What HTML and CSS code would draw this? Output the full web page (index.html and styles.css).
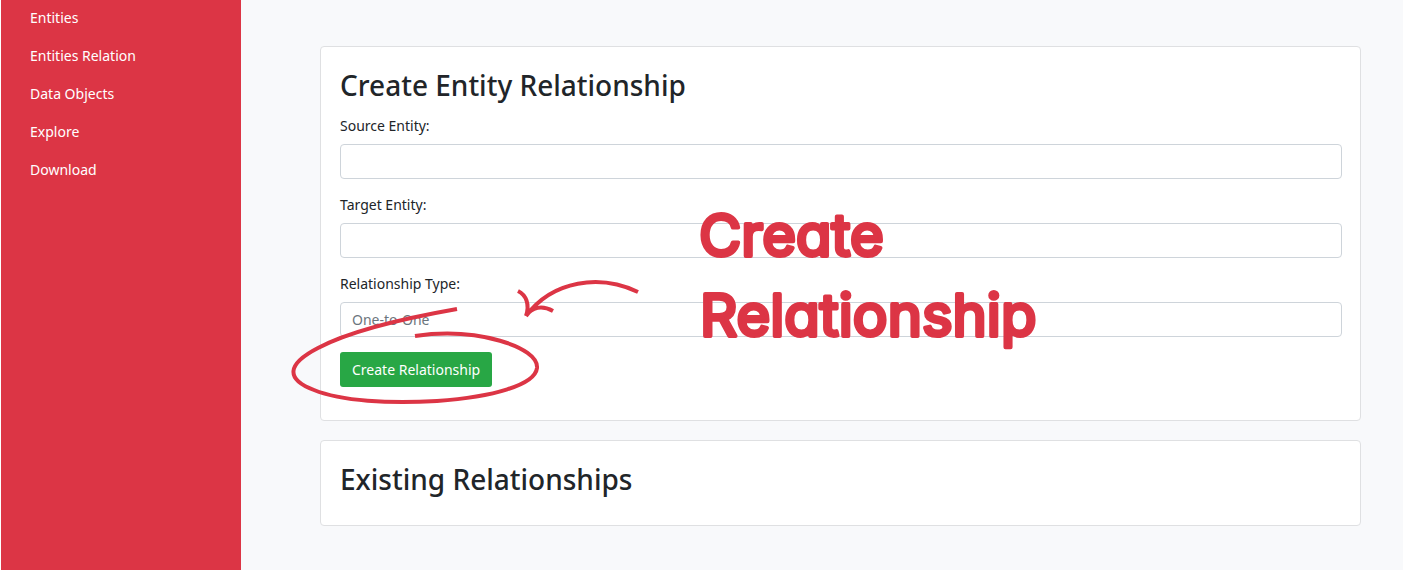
FILE: index.html
```
<!DOCTYPE html>
<html lang="en">
<head>
<meta charset="utf-8">
<title>Create Entity Relationship</title>
<link rel="stylesheet" href="styles.css">
</head>
<body>
<div class="layout">
  <nav class="sidebar">
    <a class="nav-link" href="#">Entities</a>
    <a class="nav-link" href="#">Entities Relation</a>
    <a class="nav-link" href="#">Data Objects</a>
    <a class="nav-link" href="#">Explore</a>
    <a class="nav-link" href="#">Download</a>
  </nav>
  <main class="content">
    <section class="card card-form">
      <h2 class="title">Create Entity Relationship</h2>
      <form>
        <div class="field">
          <label class="label" for="source">Source Entity:</label>
          <input class="control" id="source" type="text">
        </div>
        <div class="field">
          <label class="label" for="target">Target Entity:</label>
          <input class="control" id="target" type="text">
        </div>
        <div class="field">
          <label class="label" for="type">Relationship Type:</label>
          <input class="control" id="type" type="text" placeholder="One-to-One">
        </div>
        <button class="button" type="button">Create Relationship</button>
      </form>
      <svg class="sketch" width="780" height="220" viewBox="280 200 780 220">
        <path d="M457 309C400 319 350 331 318 348C287 364 285 379 314 390C341 401 389 404 437 401C493 397 535 385 537 368C539 347 477 327 415 336"/>
        <path d="M638 292C600 274 553 280 526 316M518 291C526 295 530 304 526 316C532 307 542 305 553 311"/>
        <text class="callout" x="699" y="256">Create</text>
        <text class="callout" x="700" y="336">Relationship</text>
      </svg>
    </section>
    <section class="card">
      <h2 class="title">Existing Relationships</h2>
    </section>
  </main>
</div>
</body>
</html>
```
FILE: styles.css
```
* {
  box-sizing: border-box;
}

body {
  margin: 0;
  background: #f8f9fb;
  color: #212529;
  font: 14px/22px "Noto Sans", "Open Sans", sans-serif;
}

.layout {
  display: flex;
  min-height: 100vh;
}

.sidebar {
  flex: 0 0 241px;
  border-left: 1px solid #fff;
  background: #dc3545;
}

.nav-link {
  display: block;
  padding: 7px 29px 9px;
  color: #fff;
  text-decoration: none;
}

.nav-link:hover {
  text-decoration: underline;
}

.content {
  flex: 1;
  display: flex;
  flex-direction: column;
  gap: 19px;
  padding: 46px 42px 44px 79px;
}

.card {
  position: relative;
  padding: 19px 18px 16px 19px;
  border: 1px solid #dfe0e2;
  border-radius: 4px;
  background: #fff;
}

.card-form {
  padding-bottom: 33px;
}

.title {
  margin: 0 0 11px;
  font-size: 28px;
  font-weight: 500;
  line-height: 38px;
}

.field {
  margin-bottom: 15px;
}

.label {
  display: block;
  margin-bottom: 7px;
}

.control {
  display: block;
  width: 100%;
  height: 35px;
  padding: 0 11px;
  border: 1px solid #ced4da;
  border-radius: 4px;
  background: #fff;
  color: #495057;
  font: inherit;
}

.control::placeholder {
  color: #6c757d;
  opacity: 1;
}

.button {
  height: 35px;
  padding: 0 12px;
  border: 0;
  border-radius: 3px;
  background: #28a745;
  color: #fff;
  font: inherit;
}

.sketch {
  position: absolute;
  top: 153px;
  left: -41px;
  fill: none;
  stroke: #dc3545;
  stroke-width: 4;
  pointer-events: none;
}

.callout {
  fill: #dc3545;
  stroke-linejoin: round;
  font: 400 58px Inter, sans-serif;
  font-optical-sizing: none;
  font-feature-settings: "cv11";
}
```
